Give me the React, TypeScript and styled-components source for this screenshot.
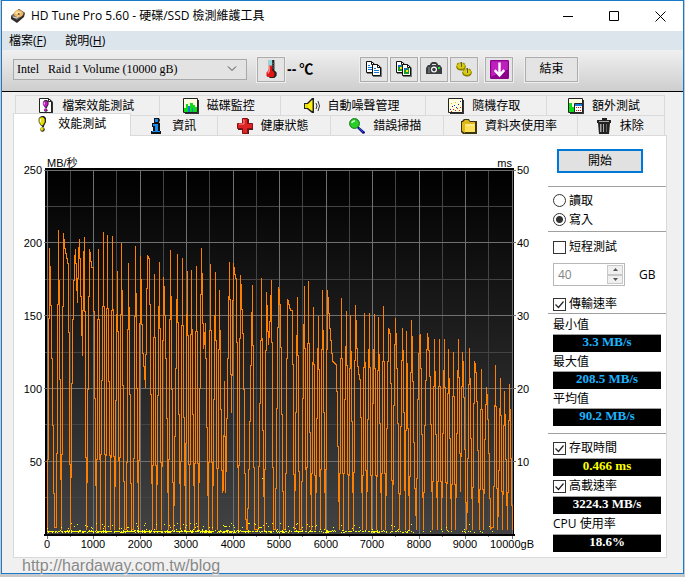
import React, { useState } from "react";
import styled, { createGlobalStyle, css } from "styled-components";

const UI = `"Open Sans", "Noto Sans CJK TC", sans-serif`;
const ARIAL = `"Liberation Sans", "Noto Sans CJK TC", sans-serif`;
const SERIF = `"Liberation Serif", "Noto Sans CJK TC", serif`;

const GlobalStyle = createGlobalStyle`
  *, *::before, *::after { box-sizing: border-box; }
  body { margin: 0; background: #c6c8ca; font: 12px/16px ${UI}; color: #000; }
  button, input, select { font: inherit; color: inherit; margin: 0; padding: 0; }
  svg { display: block; }
`;

const Desktop = styled.div`
  padding: 0 1px 2px;
`;

const Window = styled.main`
  position: relative;
  display: flex;
  flex-direction: column;
  border: 1px solid #1979ca;
  background: #f0f0f0;
`;

const TitleBar = styled.header`
  display: flex;
  align-items: center;
  height: 30px;
  padding-left: 8px;
  background: #fff;
`;

const Title = styled.h1`
  flex: 1;
  margin: 0 0 0 5px;
  font-size: 12px;
  font-weight: 400;
  white-space: nowrap;
`;

const WindowButton = styled.button`
  display: grid;
  place-items: center;
  width: 46px;
  height: 30px;
  border: 0;
  background: none;
`;

const MenuBar = styled.nav`
  display: flex;
  gap: 19px;
  height: 19px;
  padding-left: 7px;
  background: #dce4ec;
`;

const MenuItem = styled.button`
  border: 0;
  background: none;
  line-height: 19px;
`;

const Toolbar = styled.div`
  display: flex;
  align-items: center;
  height: 42px;
  padding: 0 105px 3px 11px;
  border-bottom: 1px solid #000;
  background: linear-gradient(#f0f0f0, #cecece);
`;

const Spacer = styled.div`
  flex: 1;
`;

const Combo = styled.div`
  display: grid;
  grid-template-columns: 1fr 20px;
  align-items: center;
  width: 234px;
  height: 21px;
  margin-right: 10px;
  > svg { grid-area: 1 / 2; pointer-events: none; }
`;

const ComboSelect = styled.select`
  grid-area: 1 / 1 / 2 / 3;
  width: 100%;
  height: 21px;
  padding: 0 3px;
  appearance: none;
  border: 1px solid #a8a8a8;
  border-radius: 0;
  background: #e3e3e3;
  font-family: ${SERIF};
  white-space: pre;
`;

const ToolButton = styled.button<{ $wide?: boolean; $gap?: number }>`
  display: grid;
  place-items: center;
  width: ${(p) => (p.$wide ? 53 : 28)}px;
  height: 25px;
  margin-left: ${(p) => p.$gap ?? 2}px;
  border: 1px solid #acacac;
  background: #e4e4e4;
  box-shadow: 0 0 0 1px #efefef;
`;

const Temperature = styled.output`
  display: flex;
  gap: 3px;
  margin-left: 2px;
  font: bold 14px/16px ${ARIAL};
`;

const Body = styled.div`
  padding: 3px 16px 15px 11px;
`;

const TabRow = styled.div<{ $inset?: boolean }>`
  display: flex;
  height: 20px;
  padding: 0 2px 0 ${(p) => (p.$inset ? 2 : 0)}px;
`;

const Tab = styled.button<{ $grow: number }>`
  display: flex;
  flex: ${(p) => p.$grow} 1 0;
  align-items: center;
  justify-content: center;
  gap: 8px;
  min-width: 0;
  padding-right: 3px;
  border: solid #dadada;
  border-width: 1px 1px 0 0;
  background: #f0f0f0;
  white-space: nowrap;
  &:first-child { border-left-width: 1px; }
  svg { flex: none; }
  &[aria-selected="true"] {
    position: relative;
    height: 23px;
    margin-top: -2px;
    padding-bottom: 3px;
    background: #fff;
  }
`;

const Panel = styled.section`
  display: grid;
  grid-template-columns: minmax(0, 1fr) 118px;
  border: 1px solid #dadada;
  background: #fff;
`;

const ChartSvg = styled.svg`
  width: 100%;
  height: auto;
  font: 11px ${ARIAL};
`;

const Side = styled.form`
  display: flex;
  flex-direction: column;
  padding: 13px 0 4px;
`;

const Group = styled.div<{ $top: number; $bottom: number }>`
  display: flex;
  flex-direction: column;
  padding: ${(p) => p.$top}px 5px ${(p) => p.$bottom}px;
  border-top: 1px solid #a0a0a0;
`;

const StartButton = styled.button`
  width: 86px;
  height: 24px;
  margin: 0 0 13px 9px;
  border: 2px solid #0078d7;
  background: #e1e1e1;
`;

const Choice = styled.label<{ $height: number }>`
  display: flex;
  align-items: center;
  gap: 3px;
  height: ${(p) => p.$height}px;
`;

const mark = css`
  flex: none;
  width: 13px;
  height: 13px;
  appearance: none;
  border: 1px solid #333;
  background: #fff;
`;

const Radio = styled.input`
  ${mark}
  border-radius: 50%;
  &:checked { background: radial-gradient(circle, #333 3px, #fff 4px); }
`;

const CheckInput = styled.input`
  ${mark}
  grid-area: 1 / 1;
`;

const CheckBox = styled.span`
  display: grid;
  svg { grid-area: 1 / 1; pointer-events: none; visibility: hidden; }
  input:checked + svg { visibility: visible; }
`;

const SpinRow = styled.div`
  display: flex;
  align-items: center;
  gap: 14px;
  margin: 7px 0 9px;
`;

const Spin = styled.div`
  display: grid;
  grid-template-columns: 1fr 16px;
  grid-template-rows: 1fr 1fr;
  width: 72px;
  height: 23px;
  padding: 1px;
  border: 1px solid #b8b8b8;
`;

const SpinInput = styled.input`
  grid-row: 1 / 3;
  width: 100%;
  padding-left: 3px;
  border: 0;
  background: #fff;
  color: #838383;
`;

const SpinButton = styled.button`
  display: grid;
  place-items: center;
  border: 1px solid #c8c8c8;
  background: #f0f0f0;
`;

const Caption = styled.label<{ $height: number }>`
  height: ${(p) => p.$height}px;
  line-height: ${(p) => p.$height}px;
`;

const Reading = styled.output<{ $color: string }>`
  height: 18px;
  border-top: 1px solid #a0a0a0;
  background: #000;
  color: ${(p) => p.$color};
  font: bold 13px/13px ${SERIF};
  text-align: center;
`;

const Watermark = styled.a`
  position: absolute;
  bottom: -2px;
  left: 20px;
  color: #878787;
  font: 16px/18px ${ARIAL};
  text-decoration: none;
  text-shadow: 0 1px 1px #fff;
`;

/* Transfer-rate samples, x and y in thirds of a chart pixel. */
const RATE = `22,947 25,520 28,99 31,212 34,330 37,530 40,734 43,938 49,938 52,492 55,45 58,345 61,643 64,942 67,497 70,54 73,90 76,110 79,125 82,140 85,155
88,552 91,942 94,630 97,380 100,250 103,141 106,104 109,190 112,262 115,120 118,72 121,190 124,300 127,420 130,155 133,66 136,510 139,942 142,664 145,385 148,104 151,125 154,158 160,158
163,420 166,680 169,942 172,525 175,104 178,525 181,942 184,495 187,495 190,51 193,495 196,942 199,500 202,60 205,500 208,500 211,942 214,510 217,63 220,504 223,942 226,685 229,426 232,168 235,530 238,942 241,513 244,84 247,370 250,656 253,942 259,942
262,545 265,144 268,410 271,670 274,942 280,942 283,518 286,93 289,378 292,660 295,942 298,530 301,123 304,265 307,390 310,440 313,470 316,518 319,320 322,120 328,133 331,405 334,670 337,942 340,560 343,177 346,560 349,942 352,674 355,408 358,141 361,540 364,942
367,564 370,186 373,243 376,360 379,500 382,720 385,942 388,524 391,105 394,385 397,660 400,942 403,800 406,530 409,390 412,117 415,530 418,670 421,942 424,536 427,129 430,536 433,680 436,942 439,430 442,168 445,555 448,942 451,554 454,165 457,520 460,680 463,942
466,548 469,153 472,548 475,942 478,660 481,380 484,99 487,250 490,400 493,380 496,325 499,534 502,740 505,942 508,545 511,147 514,545 517,942 520,680 523,430 526,171 529,580 532,942 535,580 538,225 541,465 544,700 547,832 550,822 553,498 556,832 559,708 562,510 565,350 568,141 571,366 574,593 577,370 580,144
583,168 586,186 589,195 592,570 595,942 598,560 601,180 604,235 607,330 610,380 613,668 616,884 619,942 622,942 625,817 628,712 631,530 634,375 637,210 640,575 643,942 655,942 658,564 661,564 664,189 667,550 670,745 673,942 676,584 679,231 682,314 685,387 688,350 691,290 694,195 697,570 700,942 706,942
709,700 712,460 715,216 718,228 721,310 724,485 727,714 730,942 736,942 739,610 742,252 745,262 748,275 751,285 757,285 760,613 763,942 766,708 769,478 772,246 775,595 778,942 784,942 787,659 790,443 793,213 796,585 799,942 802,570 805,198 808,570 811,732 814,942 817,608 820,276 823,622 826,942
829,722 832,500 835,303 838,625 841,942 844,582 847,225 850,465 853,720 856,942 859,583 862,225 865,270 868,320 871,360 874,390 877,440 883,445 889,447 892,612 895,776 898,942 901,609 904,249 907,609 910,942 913,610 916,500 919,288 922,616 925,942 928,619 931,300 934,516 937,725 940,942 943,605 946,270
949,362 952,440 955,470 958,490 961,495 964,720 967,942 970,618 973,294 976,592 979,942 982,718 985,510 988,294 991,618 994,942 997,620 1000,510 1003,297 1006,622 1009,942 1012,625 1015,306 1018,530 1021,725 1024,942 1027,607 1030,273 1033,607 1036,942 1039,740 1042,540 1045,339 1048,349 1051,360 1054,652 1057,942
1060,675 1063,470 1066,309 1069,400 1072,520 1075,730 1078,942 1081,735 1084,535 1087,339 1090,475 1093,710 1096,942 1099,348 1102,545 1105,740 1108,942 1111,628 1114,315 1117,416 1120,582 1123,780 1126,860 1129,942 1132,640 1135,470 1138,363 1141,357 1144,565 1147,755 1150,942 1153,722 1156,540 1159,450 1162,354
1165,381 1168,430 1171,540 1174,715 1177,942 1180,657 1183,372 1186,564 1189,750 1192,942 1195,657 1198,372 1201,657 1204,942 1207,750 1210,560 1213,372 1216,660 1219,942 1222,670 1225,402 1228,580 1231,760 1234,942 1237,677 1240,411 1243,677 1246,942 1249,750 1252,560 1255,372 1258,602 1261,830 1264,620 1267,411
1270,470 1273,626 1276,780 1279,942 1282,840 1285,618 1288,399 1291,580 1294,760 1297,942 1300,690 1303,438 1306,455 1309,490 1312,630 1315,780 1318,942 1321,702 1324,462 1327,702 1330,942 1333,730 1336,620 1339,516 1342,560 1345,670 1348,760 1351,942 1357,938 1360,938 1363,694 1366,450 1369,697
1372,942 1375,865 1378,670 1381,489 1384,715 1387,942 1390,735 1393,528 1396,670 1399,800 1402,942 1405,724 1408,507 1411,660 1414,800 1417,942`;

/* One vertical run per pixel column, reaching halfway to each neighbour. */
const rateColumns = (() => {
  const samples = RATE.trim()
    .split(/\s+/)
    .map((pair) => pair.split(",").map(Number))
    .map(([x, y]) => [26 + Math.floor(x / 3), 79 + Math.floor(y / 3)]);
  const columns: number[][] = [];
  samples.forEach(([x, y], i) => {
    columns.push([x, y]);
    const next = samples[i + 1];
    if (!next) return;
    for (let c = x + 1; c < next[0]; c++) {
      columns.push([c, Math.round(y + ((next[1] - y) * (c - x)) / (next[0] - x))]);
    }
  });
  return columns
    .map(([x, y], i) => {
      const before = (y + (columns[i - 1]?.[1] ?? y)) / 2;
      const after = (y + (columns[i + 1]?.[1] ?? y)) / 2;
      const top = Math.floor(Math.min(y, before, after));
      const bottom = Math.floor(Math.max(y, before, after)) + 1;
      return `M${x} ${top}h1V${bottom}h-1z`;
    })
    .join("");
})();

const accessDots = (() => {
  let seed = 7;
  const next = () => {
    seed = (seed * 16807) % 2147483647;
    return seed / 2147483647;
  };
  let d = "M248 342h1v1h-1z";
  const dot = (x: number, y: number) => {
    d += `M${x} ${y}h1v1h-1z`;
  };
  for (let x = 33; x < 480; x++) {
    const density = x < 240 ? 1 : x < 320 ? 0.8 : x < 400 ? 0.55 : 0.18;
    if (next() < density * 0.85) dot(x, 395);
    if (next() < density * 0.35) dot(x, 396);
    if (next() < density * 0.18) dot(x, 394);
    if (next() < density * 0.35) dot(x, 387 + Math.floor(next() * 8));
  }
  return d;
})();

const steps = (count: number) => Array.from({ length: count }, (_, i) => i);

function RateChart() {
  const vx = (i: number) => 33 + Math.floor(23.25 * i);
  const hy = (i: number) => 34 + Math.floor(36.4 * i);
  return (
    <ChartSvg viewBox="0 0 534 421" role="img" aria-label="MB/秒">
      <defs>
        <linearGradient id="plot" x1="0" y1="0" x2="0" y2="1">
          <stop offset="0" stopColor="#000" />
          <stop offset="1" stopColor="#424242" />
        </linearGradient>
      </defs>
      <g shapeRendering="crispEdges">
        <rect x="31" y="32" width="469" height="368" fill="#000" />
        <rect x="33" y="34" width="466" height="364" fill="url(#plot)" />
        {steps(21).filter((i) => i % 2).map((i) => (
          <rect key={i} x={vx(i)} y="34" width="1" height="364" fill="#444" />
        ))}
        {steps(10).filter((i) => i % 2).map((i) => (
          <rect key={i} x="31" y={hy(i)} width="468" height="1" fill="#444" />
        ))}
        {steps(21).map((i) => (
          <rect key={i} x={vx(i)} y="398" width="1" height={i % 2 ? 3 : 5} fill="#777" />
        ))}
        {steps(11).map((i) => (
          <rect key={i} x={vx(i * 2)} y="34" width="1" height="364" fill="#707070" />
        ))}
        {steps(5).map((i) => (
          <rect key={i} x="30" y={hy(i * 2)} width="472" height="1" fill="#707070" />
        ))}
        <rect x="30" y="398" width="471" height="2" fill="#000" />
        <path d={rateColumns} fill="#ff8000" />
        <path d={accessDots} fill="#ff0" />
      </g>
      <text x="33" y="31">MB/秒</text>
      <text x="498" y="31" textAnchor="end">ms</text>
      {steps(5).map((i) => (
        <React.Fragment key={i}>
          <text x="28" y={38 + 73 * i} textAnchor="end">{250 - 50 * i}</text>
          <text x="503" y={38 + 73 * i}>{50 - 10 * i}</text>
        </React.Fragment>
      ))}
      {steps(10).map((i) => (
        <text key={i} x={vx(i * 2)} y="412" textAnchor="middle">{i * 1000}</text>
      ))}
      <text x="476" y="412">10000gB</text>
    </ChartSvg>
  );
}

const Icon = ({ children, size = 16 }: { children: React.ReactNode; size?: number }) => (
  <svg width={size} height={size} viewBox="0 0 16 16" aria-hidden="true">{children}</svg>
);

const DriveIcon = () => (
  <Icon>
    <path d="M1 8 9 1l6 4-1 4-7 6-6-4z" fill="#302c2c" />
    <path d="m1 8 8-7 6 4-8 7z" fill="#77706a" />
    <ellipse cx="8.5" cy="5.7" rx="4.6" ry="3.7" fill="#efb65c" />
    <ellipse cx="8" cy="5" rx="2.8" ry="1.8" fill="#ffe1a0" />
    <circle cx="8.7" cy="6" r="1.1" fill="#765225" />
    <path d="m3 9 4 1 2-3" fill="none" stroke="#ddd" />
  </Icon>
);

const ThermometerIcon = () => (
  <Icon size={18}>
    <path d="M7 0h4v9l2 2v3l-2 2H7l-2-2v-3l1-2z" fill="#222" />
    <path d="M6 0h3v9l2 2v3l-1 1H5l-1-1v-3l2-2z" fill="#e01616" />
    <path d="M6 0h3v5H6z" fill="#87dce0" />
    <path d="M6 5h1v5l-1 2H5v-1l1-2z" fill="#ff8c8c" />
    <path d="M9 3h2M9 5h2M9 7h2" stroke="#555" />
  </Icon>
);

const Page = ({ x, y, photo }: { x: number; y: number; photo?: boolean }) => (
  <g transform={`translate(${x} ${y})`}>
    <path d="M1 1h6l3 3v9H1z" fill="#777" />
    <path d="M.5.5h5l3 3v8h-8z" fill="#fff" stroke="#111" />
    <path d="M5.5.5v3h3" fill="none" stroke="#111" />
    {photo ? (
      <>
        <path d="M2 4h5v6H2z" fill="#159c25" />
        <path d="M2 4h3v2H2z" fill="#1866c8" />
        <path d="M4 6h2v2H4z" fill="#ffe21a" />
      </>
    ) : (
      <path d="M2 4.5h2M2 6.5h5M2 8.5h5" stroke="#1677d2" />
    )}
  </g>
);

const CopyIcon = ({ photo }: { photo?: boolean }) => (
  <Icon>
    <Page x={0} y={0} photo={photo} />
    <Page x={6} y={3} photo={photo} />
  </Icon>
);

const CameraIcon = () => (
  <Icon>
    <path d="M4 4V3l2-2h4l2 2v1h2l2 3v6H0V7l2-3z" fill="#3b3f41" />
    <path d="M6 3h4v1H6z" fill="#ddd" />
    <path d="M2 6h2v6H2z" fill="#666" />
    <circle cx="8" cy="8.6" r="3" fill="#fff" />
    <circle cx="8" cy="8.6" r="1.8" fill="#3b3f41" />
    <path d="M12 6h2v2h-2z" fill="#24e336" />
  </Icon>
);

const GearsIcon = () => (
  <Icon>
    {[[5, 5], [11, 11]].map(([x, y]) => (
      <g key={x}>
        <ellipse cx={x} cy={y + 1} rx="4.4" ry="3.4" fill="#6c6400" />
        <ellipse cx={x} cy={y} rx="4" ry="3" fill="#d8c800" stroke="#a09400" strokeWidth="2" strokeDasharray="2 1" />
        <ellipse cx={x} cy={y} rx="3.6" ry="2.6" fill="#d8cc10" />
        <path d={`M${x + 0.5} ${y - 4}v5`} stroke="#555" />
      </g>
    ))}
  </Icon>
);

const DownIcon = () => (
  <Icon size={19}>
    <rect width="16" height="16" rx="1" fill="#8c008c" />
    <path d="M1 1h14v7L1 14z" fill="#bd20bd" />
    <path d="M8 2v10M4 8.5 8 13l4-4.5" fill="none" stroke="#fff" strokeWidth="2" />
  </Icon>
);

const Exclaim = ({ fill }: { fill: string }) => (
  <>
    <path d="m6 1 2-1h2l2 2v4l-2 4v1H8v-1L6 7z" fill="#222" />
    <path d="m5 2 2-1h2l2 2v3L9 9.5H7L5 6z" fill={fill} stroke="#333" strokeWidth=".7" />
    <path d="M6.5 3v3" stroke="#fff" />
    <circle cx="8.5" cy="13.5" r="2.2" fill="#222" />
    <circle cx="8" cy="13" r="1.7" fill={fill} />
  </>
);

const Sheet = () => (
  <>
    <path d="M2 2h14v14H2z" fill="#333" />
    <path d="M.5.5h14v14H.5z" fill="#ffffe0" stroke="#222" />
  </>
);

const tabIcons: Record<string, React.ReactNode> = {
  file: (
    <>
      <path d="M2 1h10l3 3v12H2z" fill="#333" />
      <path d="M1.5.5h9l3 3v11h-12z" fill="#fff" stroke="#222" />
      <path d="M10.5.5v3h3" fill="none" stroke="#222" />
      <g transform="translate(1.5 2) scale(.75)"><Exclaim fill="#cb12cb" /></g>
    </>
  ),
  monitor: (
    <>
      <Sheet />
      <path d="M1 10h2v4H1zM3 6h2v8H3zM7 5h3v9H7zM10 7h2v7h-2zM12 9h2v5h-2z" fill="#0bdc16" />
      <path d="M5 8h2v6H5zM9 10h1v4H9z" fill="#187ae0" />
    </>
  ),
  sound: (
    <>
      <path d="M0 5h3l5-5h2v15H8l-5-4H0z" fill="#222" />
      <path d="M1 6h3v4H1z" fill="#e8dc00" />
      <path d="m4 6 4-4v11l-4-3z" fill="#ffee16" />
      <path d="M8 2h1v11H8z" fill="#998f00" />
      <path d="M12 5q2 3 0 6M14 3q3 5 0 10" fill="none" stroke="#333" />
    </>
  ),
  random: (
    <>
      <Sheet />
      <path d="M2 11h1v1H2zM4 8h1v1H4zM6 7h1v1H6zM8 9h1v1H8zM10 6h1v1h-1zM12 3h1v1h-1z" fill="#2222d0" />
      <path d="M3 13h1v1H3zM5 11h1v1H5zM7 12h1v1H7zM9 10h1v1H9zM12 9h1v1h-1zM11 12h1v1h-1z" fill="#e41c1c" />
      <path d="M3 5h1v1H3zM7 4h1v1H7z" fill="#e0c200" />
    </>
  ),
  extra: (
    <>
      <Sheet />
      <path d="M1 5h3v9H1zM4 9h2v5H4z" fill="#0bdc16" />
      <path d="M6.500 5.500h8v9h-8z" fill="#fff" stroke="#222" />
      <path d="M7 6h7v2H7z" fill="#187ae0" />
      <path d="M8 9h1v1H8zM10 9h1v1h-1zM12 9h1v1h-1zM8 12h1v1H8zM10 12h1v1h-1zM12 12h1v1h-1z" fill="#d11" />
    </>
  ),
  bench: <Exclaim fill="#e6e000" />,
  info: (
    <>
      <path d="M6 0h5l1 2-1 3H6zM4 5h8v8h1v3H3v-3h2V9H4z" fill="#111" />
      <path d="M7 1h3v3H7zM5 6h5v7h2v1H4v-1h3V8H5z" fill="#168cf0" />
    </>
  ),
  health: (
    <>
      <path d="M6 1h6v5h4v6h-4v4H6v-4H1V6h5z" fill="#472020" />
      <path d="M5.500.500h5v5h5v5h-5v5h-5v-5h-5v-5h5z" fill="#dc2424" stroke="#891010" />
      <path d="M6 2h1v4H2" fill="none" stroke="#ff8a8a" />
    </>
  ),
  scan: (
    <>
      <path d="m9 8 7 6v1l-2 1-6-6z" fill="#101080" />
      <path d="m10 10 4 4" stroke="#2a50ff" />
      <circle cx="5.500" cy="5.500" r="4.900" fill="#27d027" stroke="#176b17" />
      <path d="M3 5q0-2 3-2" fill="none" stroke="#d6ffd6" strokeWidth="1.500" />
    </>
  ),
  folder: (
    <>
      <path d="M0 3h1l2-2h5l1 2h7v13H2l-2-2z" fill="#3c3610" />
      <path d="M1 4h1l2-2h3l2 2h5v2H4v9L1 13z" fill="#dfb81e" />
      <path d="M4 6h10v8H4z" fill="#ffe15a" />
      <path d="M5 7h8" stroke="#fff6b4" />
    </>
  ),
  erase: (
    <>
      <path d="M6 0h5v2h4v3H1V2h5zM2 5h12l-1 11H3z" fill="#222" />
      <path d="M3 3h10v1H3zM4 6h1v8H4zM7 6h1v8H7z" fill="#aaa" />
      <path d="M5 6h1v8H5zM10 6h1v8h-1z" fill="#666" />
    </>
  ),
};

const tabRows = [
  [["file", "檔案效能測試", 145], ["monitor", "磁碟監控", 121], ["sound", "自動噪聲管理", 145], ["random", "隨機存取", 121], ["extra", "額外測試", 118]],
  [["bench", "效能測試", 117], ["info", "資訊", 87], ["health", "健康狀態", 113], ["scan", "錯誤掃描", 113], ["folder", "資料夾使用率", 136], ["erase", "抹除", 86]],
] as [string, string, number][][];

function Check({ label, height, initial = true }: { label: string; height: number; initial?: boolean }) {
  return (
    <Choice $height={height}>
      <CheckBox>
        <CheckInput type="checkbox" defaultChecked={initial} />
        <svg width="13" height="13" viewBox="0 0 13 13" aria-hidden="true">
          <path d="m2.500 6.500 3 3 5-6" fill="none" stroke="#222" strokeWidth="1.200" />
        </svg>
      </CheckBox>
      {label}
    </Choice>
  );
}

export default function App() {
  const [tab, setTab] = useState("bench");
  return (
    <Desktop>
      <GlobalStyle />
      <Window>
        <TitleBar>
          <DriveIcon />
          <Title>HD Tune Pro 5.60 - 硬碟/SSD 檢測維護工具</Title>
          <WindowButton aria-label="最小化">
            <svg width="11" height="11"><path d="M0 5.500h10" stroke="#000" /></svg>
          </WindowButton>
          <WindowButton aria-label="最大化">
            <svg width="11" height="11"><path d="M.500.500h9v9h-9z" fill="none" stroke="#000" /></svg>
          </WindowButton>
          <WindowButton aria-label="關閉">
            <svg width="11" height="11"><path d="m.500.500 10 10m0-10-10 10" stroke="#000" /></svg>
          </WindowButton>
        </TitleBar>
        <MenuBar>
          <MenuItem>檔案(<u>F</u>)</MenuItem>
          <MenuItem>說明(<u>H</u>)</MenuItem>
        </MenuBar>
        <Toolbar>
          <Combo>
            <ComboSelect aria-label="磁碟">
              <option>{"Intel\u00a0\u00a0 Raid 1 Volume (10000 gB)"}</option>
            </ComboSelect>
            <svg width="10" height="6"><path d="m1 .500 4 4 4-4" fill="none" stroke="#444" /></svg>
          </Combo>
          <ToolButton $gap={0} aria-label="溫度"><ThermometerIcon /></ToolButton>
          <Temperature><span>--</span><span>℃</span></Temperature>
          <Spacer />
          <ToolButton aria-label="複製文字"><CopyIcon /></ToolButton>
          <ToolButton aria-label="複製圖片"><CopyIcon photo /></ToolButton>
          <ToolButton aria-label="螢幕擷取"><CameraIcon /></ToolButton>
          <ToolButton aria-label="選項"><GearsIcon /></ToolButton>
          <ToolButton $gap={7} aria-label="儲存"><DownIcon /></ToolButton>
          <ToolButton $gap={12} $wide>結束</ToolButton>
        </Toolbar>
        <Body>
          <div role="tablist">
            {tabRows.map((row, r) => (
              <TabRow key={r} $inset={r === 0}>
                {row.map(([id, label, grow]) => (
                  <Tab key={id} role="tab" $grow={grow} aria-selected={tab === id} onClick={() => setTab(id)}>
                    <Icon>{tabIcons[id]}</Icon>
                    {label}
                  </Tab>
                ))}
              </TabRow>
            ))}
          </div>
          <Panel>
            <RateChart />
            <Side onSubmit={(e) => e.preventDefault()}>
              <StartButton>開始</StartButton>
              <Group $top={4} $bottom={2}>
                <Choice $height={19}><Radio type="radio" name="mode" />讀取</Choice>
                <Choice $height={19}><Radio type="radio" name="mode" defaultChecked />寫入</Choice>
              </Group>
              <Group $top={6} $bottom={0}>
                <Check label="短程測試" height={18} initial={false} />
                <SpinRow>
                  <Spin>
                    <SpinInput id="span" type="text" inputMode="numeric" defaultValue="40" disabled />
                    <SpinButton type="button" aria-label="增加" disabled>
                      <svg width="5" height="3"><path d="M0 3 2.500 0 5 3z" fill="#555" /></svg>
                    </SpinButton>
                    <SpinButton type="button" aria-label="減少" disabled>
                      <svg width="5" height="3"><path d="m0 0 2.500 3L5 0z" fill="#555" /></svg>
                    </SpinButton>
                  </Spin>
                  <label htmlFor="span">GB</label>
                </SpinRow>
                <Check label="傳輸速率" height={18} />
              </Group>
              <Group $top={1} $bottom={7}>
                <Caption $height={19} htmlFor="min">最小值</Caption>
                <Reading id="min" $color="#1cb4ff">3.3 MB/s</Reading>
                <Caption $height={19} htmlFor="max">最大值</Caption>
                <Reading id="max" $color="#1cb4ff">208.5 MB/s</Reading>
                <Caption $height={19} htmlFor="avg">平均值</Caption>
                <Reading id="avg" $color="#1cb4ff">90.2 MB/s</Reading>
              </Group>
              <Group $top={4} $bottom={0}>
                <Check label="存取時間" height={20} />
                <Reading $color="#ff0" aria-label="存取時間">0.466 ms</Reading>
                <Check label="高載速率" height={20} />
                <Reading $color="#fff" aria-label="高載速率">3224.3 MB/s</Reading>
                <Caption $height={20} htmlFor="cpu">CPU 使用率</Caption>
                <Reading id="cpu" $color="#fff">18.6%</Reading>
              </Group>
            </Side>
          </Panel>
        </Body>
        <Watermark href="http://hardaway.com.tw/blog">http://hardaway.com.tw/blog</Watermark>
      </Window>
    </Desktop>
  );
}
